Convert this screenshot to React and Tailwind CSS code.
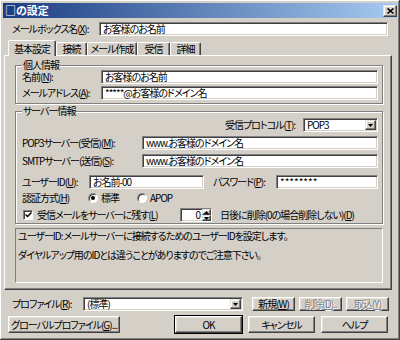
import React from 'react'

const sunken =
  'border border-t-[#808080] border-l-[#808080] border-r-white border-b-white shadow-[inset_1px_1px_0_#404040,inset_-1px_-1px_0_#d4d0c8]'
const raised =
  'border border-t-white border-l-white border-r-[#404040] border-b-[#404040] shadow-[inset_-1px_-1px_0_#808080,inset_1px_1px_0_#e4e2dc]'
const raisedSmall =
  'border border-t-[#e4e2dc] border-l-[#e4e2dc] border-r-[#404040] border-b-[#404040] shadow-[inset_-1px_-1px_0_#808080,inset_1px_1px_0_#fff] bg-[#d4d0c8]'

function Arrow({ up }) {
  return (
    <svg width="5" height="3" viewBox="0 0 5 3" className="block">
      <path d={up ? 'M2.5 0L5 3H0z' : 'M0 0h5L2.5 3z'} fill="#000" />
    </svg>
  )
}

function Field({ children, className = '' }) {
  return (
    <div
      className={`flex h-[14px] items-center overflow-hidden whitespace-nowrap bg-white pl-[3px] leading-[12px] ${sunken} ${className}`}
    >
      {children}
    </div>
  )
}

function Combo({ children, className = '' }) {
  return (
    <div className={`flex h-[14px] items-center bg-white ${sunken} ${className}`}>
      <span className="flex-1 whitespace-nowrap pl-[3px] leading-[12px]">{children}</span>
      <span className={`mr-[1px] flex h-[10px] w-[11px] items-center justify-center ${raisedSmall}`}>
        <Arrow />
      </span>
    </div>
  )
}

function Btn({ children, className = '', disabled }) {
  return (
    <button
      type="button"
      className={`flex items-center justify-center whitespace-nowrap bg-[#d4d0c8] leading-[12px] ${raised} ${
        disabled ? 'text-[#808080] [text-shadow:1px_1px_0_#fff]' : ''
      } ${className}`}
    >
      {children}
    </button>
  )
}

function Group({ title, className = '', children }) {
  return (
    <div className={`relative border border-[#808080] shadow-[1px_1px_0_#fff,inset_1px_1px_0_#fff] ${className}`}>
      <span className="absolute -top-[6px] left-[6px] bg-[#d4d0c8] px-[1px] leading-[9px]">{title}</span>
      {children}
    </div>
  )
}

function Radio({ checked }) {
  return (
    <span className="flex h-[10px] w-[10px] items-center justify-center rounded-full border border-t-[#808080] border-l-[#808080] border-r-white border-b-white bg-white shadow-[inset_1px_1px_0_#404040]">
      {checked && <span className="h-[4px] w-[4px] rounded-full bg-black" />}
    </span>
  )
}

const tabs = [
  { label: '基本設定', w: 'w-[48px]', active: true },
  { label: '接続', w: 'w-[31px]' },
  { label: 'メール作成', w: 'w-[50px]' },
  { label: '受信', w: 'w-[33px]' },
  { label: '詳細', w: 'w-[31px]' },
]

export default function App() {
  return (
    <div className="h-[340px] w-[400px] bg-[#d4d0c8] p-[3px] text-[10px] text-black font-['Noto_Sans_CJK_JP',sans-serif] [font-feature-settings:'palt'] tracking-[-1px] shadow-[inset_-1px_-1px_0_#404040,inset_1px_1px_0_#ffffff,inset_-2px_-2px_0_#808080]">
      {/* title bar */}
      <div className="flex h-[15px] items-center justify-between bg-[linear-gradient(90deg,#1b3c82,#a6caf0)] pl-[2px]">
        <span className="text-[11px] font-bold leading-[13px] tracking-normal text-white">□の設定</span>
        <span className={`flex h-[12px] w-[14px] items-center justify-center ${raisedSmall}`}>
          <svg width="7" height="6" viewBox="0 0 7 6">
            <path d="M0.5 0.5L6.5 5.5M6.5 0.5L0.5 5.5" stroke="#000" strokeWidth="1.6" />
          </svg>
        </span>
      </div>

      <div className="mt-[4px] flex h-[14px] items-center pl-[9px]">
        <span className="w-[87px] leading-[12px]">
          メールボックス名(<u>X</u>):
        </span>
        <Field className="w-[289px]">お客様のお名前</Field>
      </div>

      {/* tabs */}
      <div className="mt-[4px] flex h-[15px] items-end pl-[5px]">
        {tabs.map((t) => (
          <div
            key={t.label}
            className={`flex items-center justify-center rounded-t-[2px] border-t border-l border-t-white border-l-white border-r border-r-[#404040] shadow-[inset_-1px_0_0_#808080] ${t.w} ${
              t.active ? 'relative z-10 -mb-[1px] h-[16px] bg-[#d4d0c8]' : 'h-[13px]'
            }`}
          >
            <span className="leading-[12px]">{t.label}</span>
          </div>
        ))}
      </div>

      {/* tab panel */}
      <div className="ml-[1px] h-[235px] w-[388px] border border-t-white border-l-white border-r-[#404040] border-b-[#404040] pt-[9px] pr-[8px] pl-[10px] shadow-[inset_-1px_-1px_0_#808080]">
        <Group title="個人情報" className="h-[39px] pt-[4px] pr-[4px] pl-[6px]">
          <div className="flex h-[14px] items-center">
            <span className="w-[79px] leading-[12px]">
              名前(<u>N</u>):
            </span>
            <Field className="flex-1">お客様のお名前</Field>
          </div>
          <div className="mt-[2px] flex h-[14px] items-center">
            <span className="w-[79px] leading-[12px]">
              メールアドレス(<u>A</u>):
            </span>
            <Field className="flex-1">*****@お客様のドメイン名</Field>
          </div>
        </Group>

        <Group title="サーバー情報" className="mt-[7px] h-[113px] pt-[6px] pr-[4px] pl-[6px]">
          <div className="flex h-[14px] items-center">
            <span className="ml-[203px] w-[78px] leading-[12px]">
              受信プロトコル(<u>T</u>):
            </span>
            <Combo className="w-[75px]">POP3</Combo>
          </div>
          <div className="mt-[4px] flex h-[14px] items-center">
            <span className="w-[120px] leading-[12px]">
              POP3サーバー(受信)(<u>M</u>):
            </span>
            <Field className="flex-1">www.お客様のドメイン名</Field>
          </div>
          <div className="mt-[4px] flex h-[14px] items-center">
            <span className="w-[120px] leading-[12px]">
              SMTPサーバー(送信)(<u>S</u>):
            </span>
            <Field className="flex-1">www.お客様のドメイン名</Field>
          </div>
          <div className="mt-[7px] flex h-[14px] items-center">
            <span className="w-[67px] leading-[12px]">
              ユーザーID(<u>U</u>):
            </span>
            <Field className="w-[115px]">お名前-00</Field>
            <span className="ml-[9px] w-[63px] leading-[12px]">
              パスワード(<u>P</u>):
            </span>
            <Field className="flex-1 tracking-[0px]">********</Field>
          </div>
          <div className="mt-[3px] flex h-[12px] items-center">
            <span className="w-[66px] leading-[12px]">
              認証方式(<u>H</u>)
            </span>
            <Radio checked />
            <span className="ml-[3px] w-[36px] leading-[12px]">標準</span>
            <Radio />
            <span className="ml-[3px] leading-[12px]">APOP</span>
          </div>
          <div className="mt-[4px] flex h-[14px] items-center">
            <span className="ml-[1px] flex h-[10px] w-[10px] items-center justify-center border border-t-[#808080] border-l-[#808080] border-r-white border-b-white bg-white shadow-[inset_1px_1px_0_#404040]">
              <svg width="7" height="6" viewBox="0 0 7 6">
                <path d="M0.5 2.5L2.5 4.5L6.5 0.5" stroke="#000" strokeWidth="1.5" fill="none" />
              </svg>
            </span>
            <span className="ml-[4px] w-[143px] leading-[12px]">
              受信メールをサーバーに残す(<u>L</u>)
            </span>
            <div className={`flex h-[14px] w-[32px] items-center bg-white ${sunken}`}>
              <span className="flex-1 pr-[2px] text-right leading-[12px]">0</span>
              <span className="flex h-[12px] w-[9px] flex-col">
                <span className={`flex h-[6px] items-center justify-center ${raisedSmall}`}>
                  <Arrow up />
                </span>
                <span className={`flex h-[6px] items-center justify-center ${raisedSmall}`}>
                  <Arrow />
                </span>
              </span>
            </div>
            <span className="ml-[8px] leading-[12px]">
              日後に削除(0の場合削除しない)(<u>D</u>)
            </span>
          </div>
        </Group>

        <div className={`mt-[4px] h-[55px] bg-[#d4d0c8] pt-[1px] pl-[2px] ${sunken} shadow-none`}>
          <p className="leading-[12px]">ユーザーID: メールサーバーに接続するためのユーザーIDを設定します。</p>
          <p className="mt-[7px] leading-[12px]">ダイヤルアップ用のIDとは違うことがありますのでご注意下さい。</p>
        </div>
      </div>

      {/* bottom rows */}
      <div className="mt-[7px] flex h-[14px] items-center pl-[9px]">
        <span className="w-[71px] leading-[12px]">
          プロファイル(<u>R</u>):
        </span>
        <Combo className="w-[160px]">(標準)</Combo>
        <Btn className="ml-[9px] h-[14px] w-[43px]">
          新規(<u>W</u>)
        </Btn>
        <Btn disabled className="ml-[4px] h-[14px] w-[43px]">
          削除(<u>D</u>)..
        </Btn>
        <Btn disabled className="ml-[4px] h-[14px] w-[43px]">
          取込(<u>Y</u>)
        </Btn>
      </div>
      <div className="mt-[5px] flex h-[17px] items-center pl-[5px]">
        <Btn className="h-[17px] w-[112px]">
          グローバルプロファイル(<u>G</u>)...
        </Btn>
        <Btn className="ml-[55px] h-[17px] w-[67px] outline outline-1 outline-black">OK</Btn>
        <Btn className="ml-[6px] h-[17px] w-[67px]">キャンセル</Btn>
        <Btn className="ml-[6px] h-[17px] w-[67px]">ヘルプ</Btn>
      </div>
    </div>
  )
}
